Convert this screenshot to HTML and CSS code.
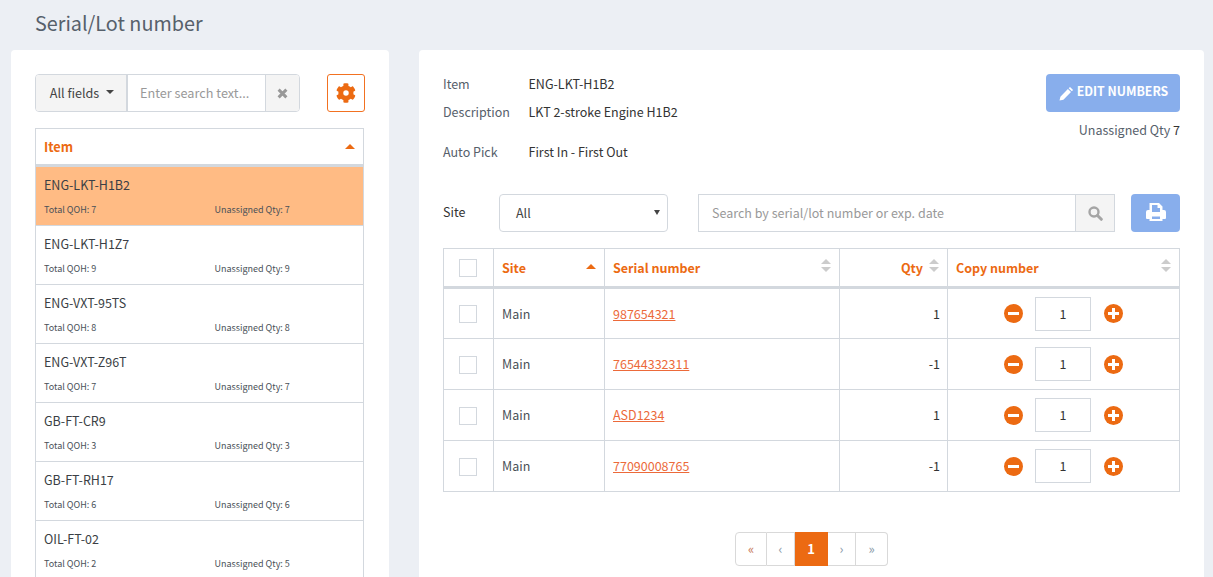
FILE: index.html
```html
<!DOCTYPE html>
<html lang="en">
<head>
<meta charset="utf-8">
<title>Serial/Lot number</title>
<link rel="stylesheet" href="styles.css">
</head>
<body>
<h1 class="page-title">Serial/Lot number</h1>
<main class="layout">
  <section class="card side">
    <div class="search-row">
      <div class="search-group">
        <button class="fields-btn">All fields <span class="caret"></span></button>
        <input class="search-input" placeholder="Enter search text...">
        <button class="clear-btn" aria-label="Clear"><svg width="11" height="11" viewBox="0 0 11 11"><path d="M1.600 1.600 9.400 9.400M9.400 1.600 1.600 9.400" stroke="#999" stroke-width="3"/></svg></button>
      </div>
      <button class="gear-btn" aria-label="Settings"><svg width="20" height="20" viewBox="0 0 512 512"><path fill="#ec6a12" d="M487 316l-43-25c4-23 4-47 0-70l43-25c5-3 7-9 5-14-11-36-30-68-55-95-4-4-10-5-15-2l-43 25c-18-15-39-27-61-35V25c0-6-4-11-9-12-37-8-75-8-111 0-5 1-9 6-9 12v50c-22 8-43 20-61 35L85 85c-5-3-11-2-15 2-25 27-44 59-55 95-2 5 0 11 5 14l43 25c-4 23-4 47 0 70l-43 25c-5 3-7 9-5 14 11 36 30 68 55 95 4 4 10 5 15 2l43-25c18 15 39 27 61 35v50c0 6 4 11 9 12 37 8 75 8 111 0 5-1 9-6 9-12v-50c22-8 43-20 61-35l43 25c5 3 11 2 15-2 25-27 44-59 55-95 2-5 0-11-5-14zM256 326a70 70 0 1 1 0-140 70 70 0 0 1 0 140z"/></svg></button>
    </div>
    <div class="item-list">
      <div class="item-head"><span>Item</span><span class="sort-up"></span></div>
      <div class="item selected"><div class="item-name">ENG-LKT-H1B2</div><div class="item-meta"><span>Total QOH: 7</span><span>Unassigned Qty: 7</span></div></div>
      <div class="item"><div class="item-name">ENG-LKT-H1Z7</div><div class="item-meta"><span>Total QOH: 9</span><span>Unassigned Qty: 9</span></div></div>
      <div class="item"><div class="item-name">ENG-VXT-95TS</div><div class="item-meta"><span>Total QOH: 8</span><span>Unassigned Qty: 8</span></div></div>
      <div class="item"><div class="item-name">ENG-VXT-Z96T</div><div class="item-meta"><span>Total QOH: 7</span><span>Unassigned Qty: 7</span></div></div>
      <div class="item"><div class="item-name">GB-FT-CR9</div><div class="item-meta"><span>Total QOH: 3</span><span>Unassigned Qty: 3</span></div></div>
      <div class="item"><div class="item-name">GB-FT-RH17</div><div class="item-meta"><span>Total QOH: 6</span><span>Unassigned Qty: 6</span></div></div>
      <div class="item"><div class="item-name">OIL-FT-02</div><div class="item-meta"><span>Total QOH: 2</span><span>Unassigned Qty: 5</span></div></div>
    </div>
  </section>
  <section class="card detail">
    <div class="summary">
      <dl class="facts">
        <dt>Item</dt><dd>ENG-LKT-H1B2</dd>
        <dt>Description</dt><dd>LKT 2-stroke Engine H1B2</dd>
        <dt class="gap">Auto Pick</dt><dd class="gap">First In - First Out</dd>
      </dl>
      <div class="summary-actions">
        <button class="edit-btn"><svg class="edit-icon" width="15" height="15" viewBox="0 0 15 15"><path fill="#fff" d="M11 .9 14.100 4l-1.300 1.300-3.100-3.100zM8.900 3l3.100 3.100-7.600 7.600-3.900.9.900-3.900z"/></svg>EDIT NUMBERS</button>
        <div class="unassigned">Unassigned Qty <b>7</b></div>
      </div>
    </div>
    <div class="filters">
      <label class="site-label">Site</label>
      <div class="site-select">All<span class="select-arrow"></span></div>
      <div class="serial-search">
        <input class="serial-input" placeholder="Search by serial/lot number or exp. date">
        <span class="search-icon"><svg width="15" height="15" viewBox="0 0 15 15"><circle cx="6" cy="6" r="4.500" fill="none" stroke="#a5a5a5" stroke-width="2.400"/><path d="M9.500 9.500 13.300 13.300" stroke="#a5a5a5" stroke-width="3" stroke-linecap="round"/></svg></span>
      </div>
      <button class="print-btn" aria-label="Print"><svg width="20" height="20" viewBox="0 0 20 20"><path fill="#fff" fill-rule="evenodd" d="M3.500 1h9.500l3.500 3.500V8h1.500A2 2 0 0 1 20 10v6a1 1 0 0 1-1 1h-2.500v2h-13v-2H1a1 1 0 0 1-1-1v-6a2 2 0 0 1 2-2h1.500zM6 3v7h8V6h-2.500V3zM6 14.500v2.500h8v-2.500z"/></svg></button>
    </div>
    <table class="grid">
      <colgroup><col class="c-check"><col class="c-site"><col class="c-serial"><col class="c-qty"><col class="c-copy"></colgroup>
      <thead>
        <tr>
          <th class="check"><span class="box"></span></th>
          <th><div class="th-in"><span>Site</span><span class="sort-up"></span></div></th>
          <th><div class="th-in"><span>Serial number</span><span class="sort-both"></span></div></th>
          <th><div class="th-in th-right"><span>Qty</span><span class="sort-both"></span></div></th>
          <th><div class="th-in"><span>Copy number</span><span class="sort-both"></span></div></th>
        </tr>
      </thead>
      <tbody>
        <tr><td class="check"><span class="box"></span></td><td class="site">Main</td><td><a href="#">987654321</a></td><td class="num">1</td><td><div class="stepper"><span class="round minus"></span><span class="count">1</span><span class="round plus"></span></div></td></tr>
        <tr><td class="check"><span class="box"></span></td><td class="site">Main</td><td><a href="#">76544332311</a></td><td class="num">-1</td><td><div class="stepper"><span class="round minus"></span><span class="count">1</span><span class="round plus"></span></div></td></tr>
        <tr><td class="check"><span class="box"></span></td><td class="site">Main</td><td><a href="#">ASD1234</a></td><td class="num">1</td><td><div class="stepper"><span class="round minus"></span><span class="count">1</span><span class="round plus"></span></div></td></tr>
        <tr><td class="check"><span class="box"></span></td><td class="site">Main</td><td><a href="#">77090008765</a></td><td class="num">-1</td><td><div class="stepper"><span class="round minus"></span><span class="count">1</span><span class="round plus"></span></div></td></tr>
      </tbody>
    </table>
    <nav class="pager">
      <a>«</a><a>‹</a><a class="current">1</a><a>›</a><a>»</a>
    </nav>
  </section>
</main>
</body>
</html>
```

FILE: styles.css
```css
* { box-sizing: border-box; }
html, body { height: 100%; }
body {
  margin: 0;
  height: 577px;
  overflow: hidden;
  background: #eceff4;
  color: #333;
  font-family: "Noto Sans CJK SC", "Noto Sans", sans-serif;
  font-size: 12.500px;
  line-height: 18px;
}
button, input { font-family: inherit; }
.page-title {
  margin: 0;
  padding: 9px 0 0 35px;
  height: 50px;
  font-size: 19.800px;
  line-height: 27px;
  font-weight: 400;
  color: #56606b;
}
.layout { display: flex; gap: 30px; padding: 0 9px 0 11px; align-items: flex-start; }
.card { background: #fff; border-radius: 4px 4px 0 0; height: 527px; padding: 24px; overflow: hidden; }
.side { width: 378px; flex: none; }
.detail { flex: 1; min-width: 0; }

.search-row { display: flex; justify-content: space-between; width: 330px; }
.search-group { display: flex; width: 265px; height: 38px; border: 1px solid #d3d8de; border-radius: 4px; overflow: hidden; }
.fields-btn { width: 92px; background: #f4f4f4; border: 0; border-right: 2px solid #d3d8de; font-size: 12.600px; color: #444; padding: 0 0 2px 2px; display: flex; align-items: center; justify-content: center; gap: 7px; }
.caret { width: 0; height: 0; border: 4px solid transparent; border-top: 4.500px solid #444; border-bottom: 0; }
.search-input { width: 137px; border: 0; padding: 0 12px 2px; font-size: 12.700px; outline: 0; min-width: 0; }
.search-input::placeholder, .serial-input::placeholder { color: #999; opacity: 1; }
.clear-btn { flex: 1; background: #f4f4f4; border: 0; border-left: 1px solid #d3d8de; padding: 0; display: flex; align-items: center; justify-content: center; }
.gear-btn { width: 38px; height: 38px; background: #fff; border: 1px solid #f27121; border-radius: 3px; padding: 0; display: flex; align-items: center; justify-content: center; }

.item-list { width: 329px; margin-top: 16px; border: 1px solid #d3d8de; border-bottom: 0; }
.item-head { height: 38px; padding: 0 8px; border-bottom: 3px solid #d3d8de; display: flex; align-items: center; justify-content: space-between; color: #ec6a12; font-weight: 700; font-size: 12.800px; }
.sort-up { width: 0; height: 0; border: 5px solid transparent; border-top: 0; border-bottom: 5px solid #ec6a12; }
.item { height: 59px; padding: 9px 8px 0; border-bottom: 1px solid #d3d8de; }
.item.selected { background: #ffbb84; }
.item-name { line-height: 18px; color: #3b3f45; }
.item-meta { display: flex; margin-top: 9px; font-size: 9px; line-height: 14px; color: #4a5158; }
.item-meta span:first-child { width: 170.500px; }

.summary { display: flex; justify-content: space-between; height: 120px; }
.facts { margin: 0; display: grid; grid-template-columns: 85.500px auto; grid-auto-rows: 28px; align-content: start; }
.facts dt { color: #56606b; line-height: 20px; }
.facts dd { margin: 0; color: #333; line-height: 20px; }
.facts .gap { margin-top: 12px; }
.summary-actions { width: 134px; text-align: right; }
.edit-btn { width: 134px; height: 38px; background: #88aeec; border: 0; border-radius: 4px; color: #fff; font-weight: 700; font-size: 12.300px; display: flex; align-items: center; justify-content: center; gap: 3px; padding: 0 0 4px 1px; }
.edit-icon { margin-top: 4px; }
.unassigned { margin-top: 9px; color: #56606b; }
.unassigned b { font-weight: 400; color: #333; }

.filters { display: flex; align-items: center; height: 38px; }
.site-label { width: 56px; color: #333; margin-top: -3px; }
.site-select { position: relative; width: 169px; height: 38px; border: 1px solid #d3d8de; border-radius: 4px; padding: 0 16px; line-height: 35px; color: #444; }
.select-arrow { position: absolute; right: 7px; top: 15px; width: 0; height: 0; border: 3.500px solid transparent; border-top: 5px solid #444; border-bottom: 0; }
.serial-search { display: flex; width: 417px; height: 38px; margin-left: 30px; border: 1px solid #d3d8de; }
.serial-input { flex: 1; min-width: 0; border: 0; outline: 0; padding: 0 13px 2px; font-size: 12.500px; }
.search-icon { width: 39px; background: #f4f4f4; border-left: 1px solid #d3d8de; display: flex; align-items: center; justify-content: center; }
.print-btn { width: 49px; height: 38px; margin-left: 16px; background: #88aeec; border: 0; border-radius: 4px; padding: 0 0 2px; display: flex; align-items: center; justify-content: center; }

.grid { width: 736px; margin-top: 16px; border-collapse: collapse; table-layout: fixed; }
.c-check { width: 50px; }
.c-site { width: 111px; }
.c-serial { width: 235px; }
.c-qty { width: 108px; }
.c-copy { width: 232px; }
.grid th, .grid td { border: 1px solid #d3d8de; padding: 0 8px; font-size: 12.500px; }
.grid thead th { height: 39px; border-bottom-width: 3px; color: #ec6a12; font-weight: 700; text-align: left; }
.grid tbody td { height: 51px; }
.grid .check { padding: 0 1px 0 0; text-align: center; }
.box { display: inline-block; vertical-align: middle; width: 18px; height: 18px; border: 1px solid #d3d8de; background: #fff; }
.th-in { display: flex; justify-content: space-between; align-items: center; font-size: 12.500px; }
.th-in .sort-up { margin: -3px 0 0; }
.th-right { justify-content: flex-end; gap: 6px; }
.sort-both { width: 11px; height: 13px; margin: -4px -1px 0 0; position: relative; display: block; }
.sort-both::before, .sort-both::after { content: ""; position: absolute; left: 0; width: 0; height: 0; border: 5px solid transparent; }
.sort-both::before { top: 0; border-top: 0; border-bottom: 5px solid #ccc; }
.sort-both::after { bottom: 0; border-bottom: 0; border-top: 5px solid #ccc; }
.site { color: #4a5158; }
.grid a { color: #ec6a3a; text-decoration: underline; }
.num { text-align: right; padding-right: 7px !important; }
.stepper { display: flex; align-items: center; justify-content: center; }
.round { position: relative; width: 19px; height: 19px; border-radius: 50%; background: #ec6a12; }
.round::before, .plus::after { content: ""; position: absolute; background: #fff; left: 4px; top: 8px; width: 11px; height: 3px; }
.plus::after { left: 8px; top: 4px; width: 3px; height: 11px; }
.count { width: 56px; height: 34px; margin: 0 13px 0 12px; border: 1px solid #d3d8de; text-align: center; line-height: 32px; }

.pager { display: flex; margin: 40px 0 0 292px; }
.pager a { height: 34px; width: 28px; border: 1px solid #d9d9d9; border-left: 0; display: flex; align-items: center; justify-content: center; font-size: 13px; color: #8a9aa8; }
.pager a:first-child { width: 32px; border-left: 1px solid #d9d9d9; border-radius: 4px 0 0 4px; color: #c87a5a; }
.pager a:last-child { width: 32px; border-radius: 0 4px 4px 0; }
.pager a.current { width: 33px; background: #ec6a12; border-color: #ec6a12; color: #fff; font-weight: 700; }
```
